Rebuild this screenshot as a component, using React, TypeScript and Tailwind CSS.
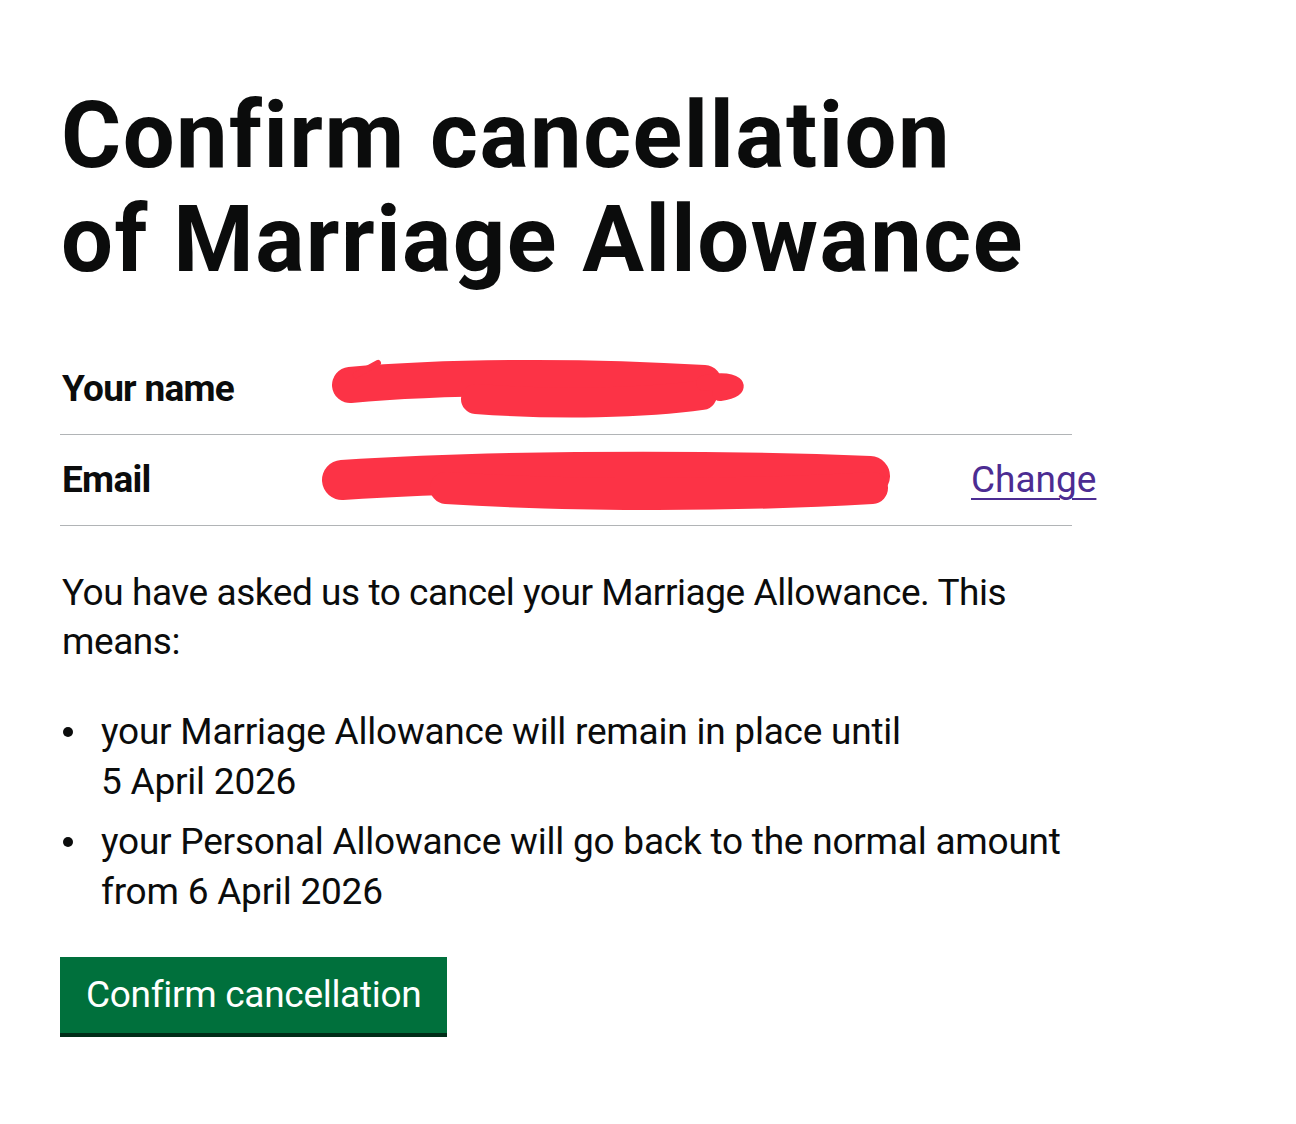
import type { ReactNode } from "react";

const font = { fontFamily: "Roboto, 'Liberation Sans', sans-serif" };

const NameRedaction = () => (
  <svg width="440" height="64" viewBox="0 0 440 64" className="block">
    <g stroke="#fc3346" strokeLinecap="round" strokeLinejoin="round" fill="none">
      <path d="M34 28 C120 20 260 18 388 26" strokeWidth="36" />
      <path d="M160 42 C240 48 330 46 386 38" strokeWidth="30" />
      <path d="M388 26 C420 20 432 32 404 36" strokeWidth="16" />
      <path d="M40 18 L62 6" strokeWidth="6" />
    </g>
  </svg>
);

const EmailRedaction = () => (
  <svg width="580" height="60" viewBox="0 0 580 60" className="block">
    <g stroke="#fc3346" strokeLinecap="round" strokeLinejoin="round" fill="none">
      <path d="M26 30 C150 22 350 18 554 26" strokeWidth="40" />
      <path d="M130 38 C260 46 420 46 556 38" strokeWidth="32" />
    </g>
  </svg>
);

const Row = ({ label, children, action }: { label: string; children: ReactNode; action?: ReactNode }) => (
  <div className="flex h-[91px] w-[1012px] items-center border-b border-[#b1b4b6]">
    <div className="w-[256px] shrink-0 pl-[2px] text-[37px] font-bold tracking-[-0.02em] text-[#0b0c0c]">{label}</div>
    <div className="flex-1">{children}</div>
    <div className="w-[101px] shrink-0 whitespace-nowrap">{action}</div>
  </div>
);

const Bullet = () => (
  <span className="flex h-[50px] w-[41px] shrink-0 items-center pl-[3px]">
    <span className="h-[10px] w-[10px] rounded-full bg-[#0b0c0c]" />
  </span>
);

export default function App() {
  return (
    <div className="min-h-screen bg-white pl-[60px] pt-[84px] text-[#0b0c0c]" style={font}>
      <h1 className="w-[1100px] pl-[1px] text-[92px] font-bold leading-[104px] tracking-[0.016em]">
        Confirm cancellation
        <br />
        of Marriage Allowance
      </h1>

      <div className="mt-[52px]">
        <Row label="Your name">
          <NameRedaction />
        </Row>
        <Row
          label="Email"
          action={
            <a href="#" className="text-[37px] text-[#4c2c92] underline decoration-2 underline-offset-[6px]">
              Change
            </a>
          }
        >
          <EmailRedaction />
        </Row>
      </div>

      <p className="mt-[42px] w-[1012px] pl-[2px] text-[37px] leading-[49px] tracking-[-0.012em]">
        You have asked us to cancel your Marriage Allowance. This means:
      </p>

      <ul className="mt-[41px] flex w-[1012px] flex-col gap-[10px] text-[37px] leading-[50px] tracking-[-0.006em]">
        <li className="flex">
          <Bullet />
          <span>your Marriage Allowance will remain in place until 5&nbsp;April&nbsp;2026</span>
        </li>
        <li className="flex">
          <Bullet />
          <span>your Personal Allowance will go back to the normal amount from 6&nbsp;April&nbsp;2026</span>
        </li>
      </ul>

      <button className="mt-[40px] flex h-[80px] items-center border-b-4 border-[#002d18] bg-[#00703c] px-[26px] text-[37px] tracking-[-0.008em] text-white">
        Confirm cancellation
      </button>
    </div>
  );
}
